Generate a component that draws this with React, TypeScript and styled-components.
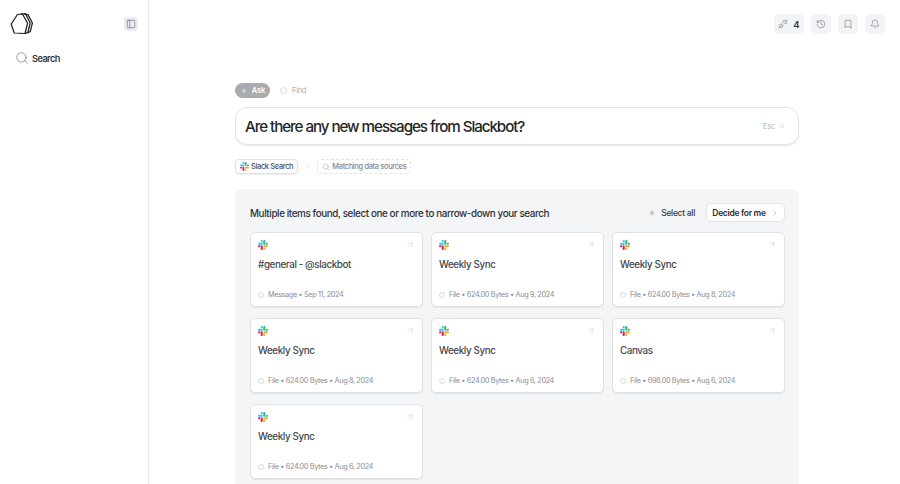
import React from "react";
import styled, { createGlobalStyle } from "styled-components";
import { Search, PanelLeft, Unplug, History, Bookmark, Bell, Asterisk, X, ChevronRight, ArrowUpRight } from "lucide-react";

const Global = createGlobalStyle`
  html, body { margin: 0; padding: 0; background: #fff; overflow: hidden; }
  body { font-family: Inter, "Liberation Sans", sans-serif; color: #2b2d31; }
  #root { width: 900px; height: 484px; overflow: hidden; }
`;

const Page = styled.div`display: flex; width: 900px; height: 484px; overflow: hidden;`;
const Sidebar = styled.aside`
  width: 149px; flex: none; box-sizing: border-box; border-right: 1px solid #e9ebee;
  display: flex; flex-direction: column; padding: 12px 0 0 10px;
`;
const SideTop = styled.div`display: flex; align-items: center; justify-content: space-between; padding-right: 10px; height: 24px;`;
const ToggleButton = styled.div`
  width: 14px; height: 14px; border-radius: 4px; background: #e9edf3; color: #5b6068;
  display: flex; align-items: center; justify-content: center;
`;
const SearchRow = styled.div`
  display: flex; align-items: center; gap: 3px; margin: 15px 0 0 5px; height: 14px;
  font-size: 9.2px; font-weight: 600; letter-spacing: -0.55px; color: #33363b;
`;
const Main = styled.main`flex: 1; display: flex; flex-direction: column; min-width: 0;`;
const TopBar = styled.div`display: flex; justify-content: flex-end; gap: 7px; padding: 14px 15px 0 0; height: 20px;`;
const TopButton = styled.div`
  width: 20px; height: 20px; border-radius: 5px; background: #f3f4f7; color: #6a6e75;
  display: flex; align-items: center; justify-content: center;
`;
const PlugButton = styled(TopButton)`
  width: 30px; gap: 5px; font-size: 9.5px; font-weight: 600; color: #3a3d42;
`;
const Content = styled.div`width: 564px; margin: 49px 0 0 86px; display: flex; flex-direction: column;`;
const Modes = styled.div`display: flex; align-items: center; gap: 10px; height: 15px;`;
const ModeAsk = styled.div`
  height: 15px; width: 35px; border-radius: 8px; background: #a9abae; color: #fff; font-size: 7.5px; font-weight: 600; letter-spacing: -0.1px;
  display: flex; align-items: center; justify-content: center; gap: 4px;
`;
const ModeFind = styled.div`display: flex; align-items: center; gap: 5px; font-size: 7.5px; letter-spacing: -0.3px; color: #a9acb1;`;
const Ring = styled.span<{ $size?: number }>`
  display: inline-block; box-sizing: border-box; width: ${p => p.$size ?? 7}px; height: ${p => p.$size ?? 7}px;
  border: 1px solid #d8dade; border-radius: 50%; flex: none;
`;
const Prompt = styled.div`
  margin-top: 9px; height: 38px; box-sizing: border-box; border: 1px solid #e1e3e7; border-radius: 12px; box-shadow: 0 1px 1px #e9ebef;
  display: flex; align-items: center; justify-content: space-between; padding: 0 12px 0 9px; background: #fff;
`;
const PromptText = styled.div`font-size: 15.2px; font-weight: 500; letter-spacing: -1.07px; color: #222428;`;
const EscHint = styled.div`display: flex; align-items: center; gap: 3px; font-size: 7.5px; letter-spacing: -0.2px; color: #b3b6ba;`;
const Steps = styled.div`display: flex; align-items: center; gap: 5px; margin-top: 14px; height: 15px;`;
const Step = styled.div<{ $dashed?: boolean }>`
  height: 15px; box-sizing: border-box; padding: 0 4px 0 4px; border: 1px ${p => (p.$dashed ? "dashed #e2e4e8" : "solid #dfe1e5")}; border-radius: 4px;
  display: flex; align-items: center; gap: 2px; font-size: 7.5px; font-weight: 500; letter-spacing: -0.37px;
  color: ${p => (p.$dashed ? "#85888e" : "#4b4e54")}; box-shadow: ${p => (p.$dashed ? "none" : "0 1px 1px #ebedf0")};
`;
const Panel = styled.section`
  margin-top: 15px; background: #f4f5f7; border-radius: 8px 8px 0 0; padding: 14px 14px 0 15px; height: 295px; box-sizing: border-box;
`;
const PanelHead = styled.div`display: flex; align-items: center; justify-content: space-between; height: 19px;`;
const PanelTitle = styled.div`font-size: 9.9px; font-weight: 500; letter-spacing: -0.41px; color: #2e3035;`;
const PanelActions = styled.div`display: flex; align-items: center; gap: 11px;`;
const SelectAll = styled.div`display: flex; align-items: center; gap: 4px; font-size: 8.5px; font-weight: 500; letter-spacing: -0.3px; color: #3a3d42;`;
const Decide = styled.div`
  height: 19px; width: 79px; box-sizing: border-box; background: #fff; border: 1px solid #e3e5e9; border-radius: 5px;
  display: flex; align-items: center; justify-content: center; gap: 5px; font-size: 8.5px; font-weight: 600; letter-spacing: -0.3px; color: #2a2c30;
`;
const Grid = styled.div`display: grid; grid-template-columns: repeat(3, 173px); gap: 11px 8px; margin-top: 10px;`;
const Card = styled.article`
  height: 75px; box-sizing: border-box; background: #fff; border: 1px solid #dfe1e5; border-radius: 5px; box-shadow: 0 1px 1px #e3e5e9;
  padding: 7px 7px 0 7px; display: flex; flex-direction: column;
`;
const CardTop = styled.div`display: flex; justify-content: space-between; align-items: flex-start; height: 12px;`;
const CardTitle = styled.div`margin-top: 6px; font-size: 9.8px; font-weight: 500; letter-spacing: -0.38px; color: #45484d; height: 13px; line-height: 13px;`;
const CardMeta = styled.div`margin-top: 19px; display: flex; align-items: center; gap: 4px; font-size: 7.3px; letter-spacing: -0.36px; color: #8a8d93;`;

const Logo = () => (
  <svg width="24" height="24" viewBox="0 0 24 24" fill="none" stroke="#1e1f22" strokeWidth="1.25" strokeLinejoin="round">
    <path d="M7.5 2.5 L1.2 12 L4.2 21 L15 21.5 L17.6 11.2 L12.5 2 Z" />
    <path d="M10.5 2 L15.5 1.8 L20.2 11 L17.8 20.6 L15 21.5" />
    <path d="M14 1.8 L18 2.6 L22.4 11 L20.2 19.6 L17.8 20.6" />
  </svg>
);

const Slack = ({ size = 10 }: { size?: number }) => (
  <svg width={size} height={size} viewBox="0 0 127 127">
    <path fill="#E01E5A" d="M27.2 80c0 7.3-5.9 13.2-13.2 13.2C6.7 93.2.8 87.3.8 80c0-7.3 5.9-13.2 13.2-13.2h13.2V80zm6.6 0c0-7.3 5.9-13.2 13.2-13.2 7.3 0 13.2 5.9 13.2 13.2v33c0 7.3-5.9 13.2-13.2 13.2-7.3 0-13.2-5.9-13.2-13.2V80z" />
    <path fill="#36C5F0" d="M47 27c-7.3 0-13.2-5.9-13.2-13.2C33.8 6.5 39.7.6 47 .6c7.3 0 13.2 5.9 13.2 13.2V27H47zm0 6.7c7.3 0 13.2 5.9 13.2 13.2 0 7.3-5.9 13.2-13.2 13.2H13.9C6.6 60.1.7 54.2.7 46.9c0-7.3 5.9-13.2 13.2-13.2H47z" />
    <path fill="#2EB67D" d="M99.9 46.9c0-7.3 5.9-13.2 13.2-13.2 7.3 0 13.2 5.9 13.2 13.2 0 7.3-5.9 13.2-13.2 13.2H99.9V46.9zm-6.6 0c0 7.3-5.9 13.2-13.2 13.2-7.3 0-13.2-5.9-13.2-13.2V13.8C66.9 6.5 72.8.6 80.1.6c7.3 0 13.2 5.9 13.2 13.2v33.1z" />
    <path fill="#ECB22E" d="M80.1 99.8c7.3 0 13.2 5.9 13.2 13.2 0 7.3-5.9 13.2-13.2 13.2-7.3 0-13.2-5.9-13.2-13.2V99.8h13.2zm0-6.6c-7.3 0-13.2-5.9-13.2-13.2 0-7.3 5.9-13.2 13.2-13.2h33.1c7.3 0 13.2 5.9 13.2 13.2 0 7.3-5.9 13.2-13.2 13.2H80.1z" />
  </svg>
);

const cards = [
  ["#general - @slackbot", "Message • Sep 11, 2024"],
  ["Weekly Sync", "File • 624.00 Bytes • Aug 9, 2024"],
  ["Weekly Sync", "File • 624.00 Bytes • Aug 8, 2024"],
  ["Weekly Sync", "File • 624.00 Bytes • Aug 8, 2024"],
  ["Weekly Sync", "File • 624.00 Bytes • Aug 6, 2024"],
  ["Canvas", "File • 698.00 Bytes • Aug 6, 2024"],
  ["Weekly Sync", "File • 624.00 Bytes • Aug 6, 2024"],
];

export default function App() {
  return (
    <Page>
      <Global />
      <Sidebar>
        <SideTop>
          <Logo />
          <ToggleButton><PanelLeft size={10} strokeWidth={1.5} /></ToggleButton>
        </SideTop>
        <SearchRow><Search size={14} strokeWidth={1} color="#55585e" />Search</SearchRow>
      </Sidebar>
      <Main>
        <TopBar>
          <PlugButton><Unplug size={10} strokeWidth={1.4} color="#5f646b" />4</PlugButton>
          <TopButton><History size={10} strokeWidth={1.4} /></TopButton>
          <TopButton><Bookmark size={10} strokeWidth={1.4} /></TopButton>
          <TopButton><Bell size={10} strokeWidth={1.4} /></TopButton>
        </TopBar>
        <Content>
          <Modes>
            <ModeAsk><Asterisk size={8} strokeWidth={1.3} />Ask</ModeAsk>
            <ModeFind><Ring />Find</ModeFind>
          </Modes>
          <Prompt>
            <PromptText>Are there any new messages from Slackbot?</PromptText>
            <EscHint>Esc <X size={8} strokeWidth={1.2} /></EscHint>
          </Prompt>
          <Steps>
            <Step><Slack size={9} />Slack Search</Step>
            <ChevronRight size={9} strokeWidth={1.2} color="#c3c5c9" />
            <Step $dashed><Search size={8} strokeWidth={1.2} />Matching data sources</Step>
          </Steps>
          <Panel>
            <PanelHead>
              <PanelTitle>Multiple items found, select one or more to narrow-down your search</PanelTitle>
              <PanelActions>
                <SelectAll><Asterisk size={10} strokeWidth={1.2} color="#8a8d93" />Select all</SelectAll>
                <Decide>Decide for me <ChevronRight size={8} strokeWidth={1.3} color="#8a8d93" /></Decide>
              </PanelActions>
            </PanelHead>
            <Grid>
              {cards.map(([title, meta], i) => (
                <Card key={i}>
                  <CardTop><Slack size={10} /><ArrowUpRight size={10} strokeWidth={1} color="#c0c2c6" /></CardTop>
                  <CardTitle>{title}</CardTitle>
                  <CardMeta><Ring $size={6} />{meta}</CardMeta>
                </Card>
              ))}
            </Grid>
          </Panel>
        </Content>
      </Main>
    </Page>
  );
}
